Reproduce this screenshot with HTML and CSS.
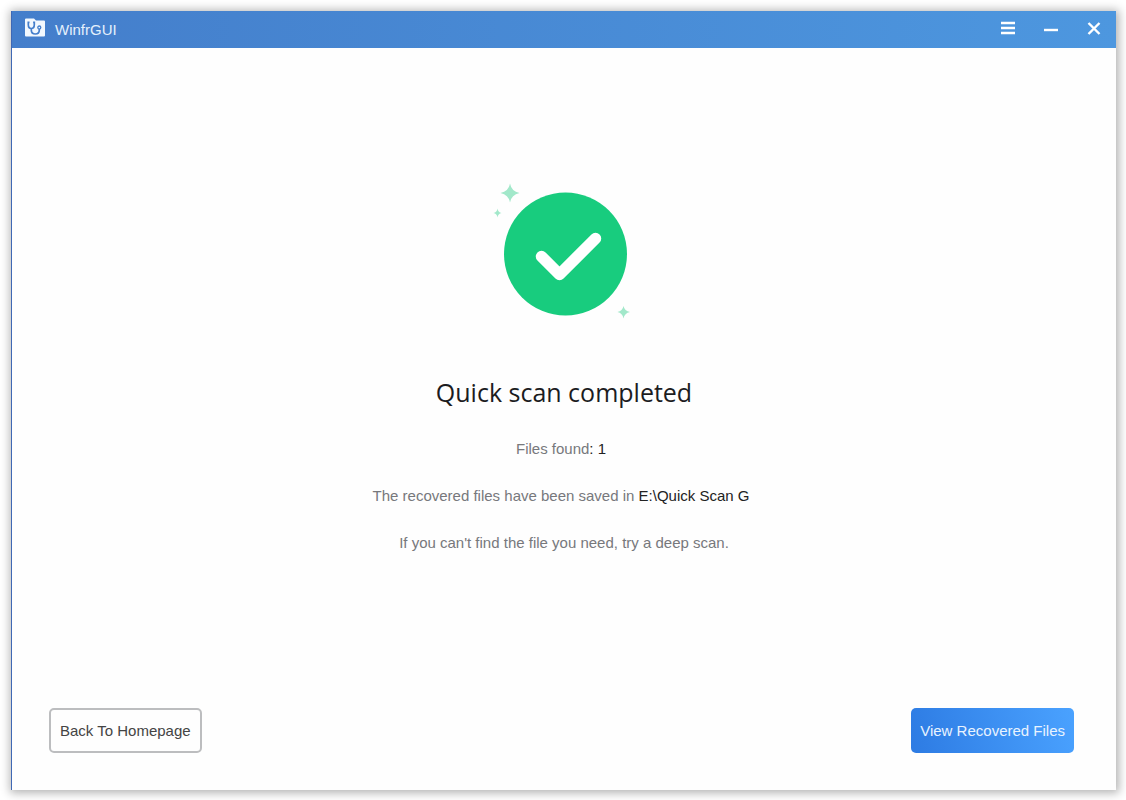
FILE: index.html
```html
<!DOCTYPE html>
<html lang="en">
<head>
<meta charset="utf-8">
<title>WinfrGUI</title>
<link rel="stylesheet" href="styles.css">
</head>
<body>
<div class="window">
  <header class="titlebar">
    <svg class="logo" viewBox="0 0 20 20" aria-hidden="true">
      <path d="M0 1.500Q0 .5 1 .5H9L11 2.500H19Q20 2.500 20 3.500V17.500Q20 18.500 19 18.500H1Q0 18.500 0 17.500Z" fill="#f2f8fe"/>
      <path d="M4.500 4.300H3.300V6.500Q3.300 10.500 6.300 10.500Q9.300 10.500 9.300 6.500V4.300H8.100M6.300 10.500V12Q6.300 16 10.300 16Q14.300 16 14.300 12V11" fill="none" stroke="#447ecb" stroke-width="1.700"/>
      <circle cx="14.300" cy="9.500" r="1.500" fill="none" stroke="#447ecb" stroke-width="1.300"/>
    </svg>
    <span class="app-name">WinfrGUI</span>
    <div class="controls">
      <button class="control" type="button" aria-label="Menu">
        <svg viewBox="0 0 16 16"><path d="M1 3H15M1 8H15M1 13H15" stroke-width="2.400"/></svg>
      </button>
      <button class="control" type="button" aria-label="Minimize">
        <svg viewBox="0 0 16 16"><path d="M1 10H15" stroke-width="2.400"/></svg>
      </button>
      <button class="control" type="button" aria-label="Close">
        <svg viewBox="0 0 16 16"><path d="M2.500 3L13.500 14M13.500 3L2.500 14" stroke-width="2.400"/></svg>
      </button>
    </div>
  </header>
  <main class="result">
    <svg class="success" viewBox="0 0 150 140" aria-hidden="true">
      <circle cx="76.500" cy="74" r="61.500" fill="#18cc7e"/>
      <path d="M52.500 76.500L70.500 94.500L106.500 58.500" fill="none" stroke="#fff" stroke-width="11.500" stroke-linecap="round" stroke-linejoin="round"/>
      <g fill="#a2e8ca">
        <path d="M21 3.500Q22.500 11.500 30.500 13Q22.500 14.500 21 22.500Q19.500 14.500 11.500 13Q19.500 11.500 21 3.500Z"/>
        <path d="M8.500 28.500Q9 32.300 12.500 33Q9 33.700 8.500 37.500Q8 33.700 4.500 33Q8 32.300 8.500 28.500Z"/>
        <path d="M134.500 126Q135.500 131 141 132Q135.500 133 134.500 138.500Q133.500 133 128.500 132Q133.500 131 134.500 126Z"/>
      </g>
    </svg>
    <h1 class="heading">Quick scan completed</h1>
    <p class="line line-detail">Files found<span class="value">: 1</span></p>
    <p class="line line-detail">The recovered files have been saved in <span class="value">E:\Quick Scan G</span></p>
    <p class="line">If you can't find the file you need, try a deep scan.</p>
  </main>
  <footer class="actions">
    <button class="button button-plain" type="button">Back To Homepage</button>
    <button class="button button-primary" type="button">View Recovered Files</button>
  </footer>
</div>
</body>
</html>
```
FILE: styles.css
```css
* {
  box-sizing: border-box;
}

body {
  margin: 0;
  min-height: 100vh;
  padding: 11px 10px 10px 11px;
  display: flex;
  background: #fff;
  font: 15px/20px "Liberation Sans", Arial, sans-serif;
}

.window {
  flex: 1;
  display: flex;
  flex-direction: column;
  background: #fefefe;
  border-left: 1px solid #3f68b4;
  box-shadow: 1px 1px 9px 2px rgba(0, 0, 0, 0.3);
}

.titlebar {
  height: 37px;
  display: flex;
  align-items: center;
  padding: 0 14px 0 13px;
  background: linear-gradient(90deg, #447ecb, #4d97df);
  color: #e4f0fc;
}

.logo {
  width: 20px;
  height: 20px;
  margin-bottom: 3px;
}

.app-name {
  margin-left: 10px;
}

.controls {
  margin: 0 0 3px auto;
  display: flex;
  gap: 27px;
}

.control {
  width: 16px;
  height: 20px;
  padding: 0;
  border: 0;
  background: none;
}

.control svg {
  display: block;
  width: 16px;
  height: 16px;
  fill: none;
  stroke: #fff;
}

.result {
  flex: 1;
  display: flex;
  flex-direction: column;
  align-items: center;
  padding-top: 132px;
}

.success {
  width: 150px;
  height: 140px;
}

.heading {
  margin: 54px 0 29px;
  font: 400 25px/36px "Open Sans", "Noto Sans", sans-serif;
  color: #1c1c1e;
}

.line {
  margin: 0 0 27px;
  color: #77787c;
}

.line-detail {
  padding-right: 6px;
}

.value {
  color: #222;
}

.actions {
  display: flex;
  justify-content: space-between;
  padding: 0 42px 37px 37px;
}

.button {
  height: 45px;
  padding: 0 9px;
  border-radius: 5px;
  font: inherit;
}

.button-plain {
  border: 2px solid #bcbdbf;
  background: #fefefe;
  color: #444;
}

.button-primary {
  border: 0;
  background: linear-gradient(75deg, #2d7be3, #4aa2ff);
  color: #e8f3ff;
}
```
